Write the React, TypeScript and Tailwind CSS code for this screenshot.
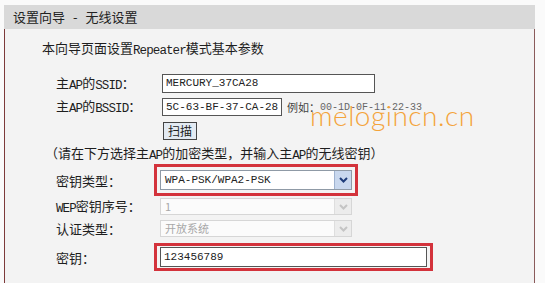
import React from "react";

function Chevron({ color }: { color: string }) {
  return (
    <svg width="9" height="6" viewBox="0 0 9 6">
      <path d="M1 1 L4.5 4.5 L8 1" fill="none" stroke={color} strokeWidth="2" />
    </svg>
  );
}

function L({ children }: { children: React.ReactNode }) {
  return (
    <span className="font-['Liberation_Mono',monospace] text-[12.5px] tracking-[-0.9px] relative top-[1px]">
      {children}
    </span>
  );
}

function Select({
  text,
  disabled,
  h,
}: {
  text: string;
  disabled?: boolean;
  h: string;
}) {
  return (
    <div
      className={`w-[192px] ${h} flex items-stretch border ${
        disabled ? "border-[#d6d6d6] bg-[#fbfbfb]" : "border-[#8f9aa6] bg-white"
      }`}
    >
      <div
        className={`flex-1 flex items-center pl-[4px] text-[11px] ${
          disabled ? "text-[#a8a8a8]" : "text-[#222] font-['Liberation_Mono',monospace]"
        }`}
      >
        {text}
      </div>
      <div
        className={`w-[17px] flex items-center justify-center border-l ${
          disabled
            ? "bg-[#ececec] border-[#dedede]"
            : "bg-[#c9d8ee] border-[#9fb3d0]"
        }`}
      >
        <Chevron color={disabled ? "#c4c4c4" : "#1f3d7a"} />
      </div>
    </div>
  );
}

export default function App() {
  const label = "w-[104px] shrink-0 text-[13px] text-[#1e1e1e] leading-none";
  return (
    <div className="relative w-[545px] h-[283px] overflow-hidden bg-[#fafafa] font-['Noto_Sans_CJK_SC',sans-serif]">
      <div className="ml-[4px] mt-[5px] w-[531px] h-[278px] flex flex-col">
        <div className="h-[24px] shrink-0 bg-[#d9d9d9] flex items-center pl-[9px] text-[13px] text-[#222]">
          <span>设置向导</span>
          <span className="mx-[8px]">-</span>
          <span>无线设置</span>
        </div>
        <div className="flex-1 bg-[#f3f3f3] border-l border-r border-l-[#7d3a3a] border-r-[#8a5a5a] pl-[51px] flex flex-col">
          <div className="mt-[12px] h-[16px] -ml-[14px] flex items-center text-[13px] text-[#1e1e1e]">
            <span>
              本向导页面设置<L>Repeater</L>模式基本参数
            </span>
          </div>

          <div className="mt-[17px] h-[19px] flex items-center">
            <div className={label}>
              主<L>AP</L>的<L>SSID</L>：
            </div>
            <div className="ml-[2px] w-[213px] h-full bg-white border border-[#555] flex items-center pl-[3px] text-[11px] text-[#222] font-['Liberation_Mono',monospace]">
              MERCURY_37CA28
            </div>
          </div>

          <div className="mt-[5px] h-[18px] flex items-center">
            <div className={label}>
              主<L>AP</L>的<L>BSSID</L>：
            </div>
            <div className="ml-[2px] w-[120px] h-full bg-white border border-[#555] flex items-center pl-[3px] text-[11px] text-[#222] font-['Liberation_Mono',monospace]">
              5C-63-BF-37-CA-28
            </div>
            <div className="ml-[5px] flex items-center text-[11px] text-[#444]">
              <span>例如：</span>
              <span className="font-['Liberation_Mono',monospace] text-[10px] text-[#666]">
                00-1D-0F-11-22-33
              </span>
            </div>
          </div>

          <div className="mt-[6px] h-[18px] flex items-center">
            <div className="w-[104px] shrink-0" />
            <div className="ml-[3px] w-[34px] h-full bg-[#e3eaf2] border border-[#444] flex items-center justify-center text-[12px] text-[#222]">
              扫描
            </div>
          </div>

          <div className="mt-[6px] h-[16px] -ml-[11px] flex items-center text-[13px] text-[#1e1e1e]">
            <span>
              （请在下方选择主<L>AP</L>的加密类型，并输入主<L>AP</L>的无线密钥）
            </span>
          </div>

          <div className="mt-[2px] h-[32px] flex items-center">
            <div className={label}>密钥类型：</div>
            <div className="-ml-[6px] border-[3px] border-[#d3323b] p-[3px]">
              <Select text="WPA-PSK/WPA2-PSK" h="h-[20px]" />
            </div>
          </div>

          <div className="mt-[2px] h-[17px] flex items-center">
            <div className={label}>
              <L>WEP</L>密钥序号：
            </div>
            <Select text="1" disabled h="h-[17px]" />
          </div>

          <div className="mt-[5px] h-[17px] flex items-center">
            <div className={label}>认证类型：</div>
            <Select text="开放系统" disabled h="h-[17px]" />
          </div>

          <div className="mt-[6px] h-[28px] flex items-center">
            <div className={label}>密钥：</div>
            <div className="-ml-[6px] border-[3px] border-[#d3323b] px-[3px] py-[1px]">
              <div className="w-[267px] h-[20px] bg-white border border-[#555] flex items-center pl-[3px] text-[11px] text-[#222] font-['Liberation_Mono',monospace]">
                123456789
              </div>
            </div>
          </div>
        </div>
      </div>
      <div className="absolute left-[310px] top-[101px] text-[28px] leading-none font-light text-[#f3a33a] font-['Lato',sans-serif] tracking-[0.5px]">
        melogincn.cn
      </div>
    </div>
  );
}
